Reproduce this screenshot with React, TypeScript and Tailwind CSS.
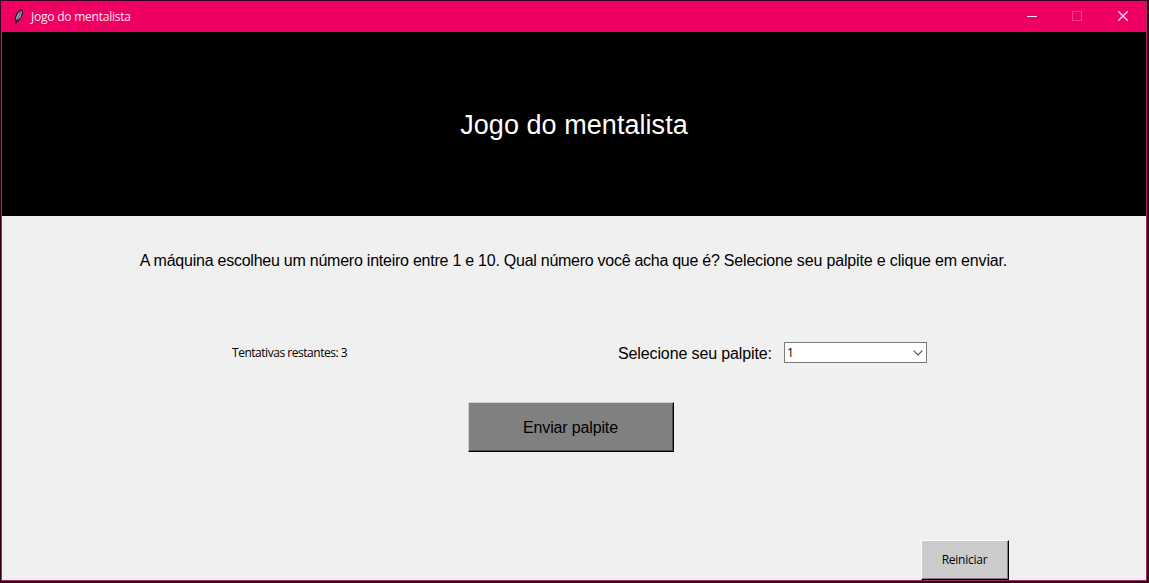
import { useState } from "react";

function FeatherIcon() {
  return (
    <svg className="mb-px block h-4 w-4" viewBox="0 0 16 16">
      <path d="M10.5 0.8 L12.8 1 L12.8 5 L11 9 L8.6 12 L7.2 12.8 L6.4 15.2 L5.4 15.2 L5.4 12 L4.6 11 L4.8 8 L6.8 4 Z" fill="#260a22" />
      <path d="M10.6 2 L11.8 2 L11.6 5 L10.2 8.4 L7.6 11.2 L6.2 10.8 L6.2 8 L8 4.4 Z" fill="#8fb0cc" />
      <path d="M10.8 3 L7 11" stroke="#3b3c58" strokeWidth="0.8" />
    </svg>
  );
}

function TitleBar() {
  return (
    <header className="flex h-[30px] shrink-0 items-center bg-[#ed0061] pl-2">
      <FeatherIcon />
      <h1 className="ml-[5px] grow text-[12px] leading-4 tracking-[-0.23px] text-[#ffe4f2]">Jogo do mentalista</h1>
      <button aria-label="Minimizar" className="flex h-full w-[46px] items-center justify-center pb-[2px] pl-[2px]">
        <svg className="h-[10px] w-[10px]" viewBox="0 0 10 10" shapeRendering="crispEdges">
          <path d="M0 5.5H10" stroke="#ffe8f4" />
        </svg>
      </button>
      <button aria-label="Maximizar" disabled className="flex h-full w-[46px] items-center justify-center pb-[2px]">
        <svg className="h-[10px] w-[10px]" viewBox="0 0 10 10" shapeRendering="crispEdges">
          <rect x="0.5" y="0.5" width="9" height="9" fill="none" stroke="#f93c88" />
        </svg>
      </button>
      <button aria-label="Fechar" className="flex h-full w-[46px] items-center justify-center pb-[2px]">
        <svg className="h-[10px] w-[10px]" viewBox="0 0 10 10">
          <path d="M0.3 0.3L9.7 9.7M9.7 0.3L0.3 9.7" stroke="#ffe8f4" strokeWidth="1.3" />
        </svg>
      </button>
    </header>
  );
}

function GuessSelect({ value }: { value: number }) {
  return (
    <button className="ml-3 flex h-[21px] w-[143px] items-center justify-between border border-[#7a7a7a] bg-white pr-[3px] pl-[2px]">
      <span className="text-[12px] leading-4">{value}</span>
      <svg className="h-[6px] w-[10px]" viewBox="0 0 10 6">
        <path d="M0.7 0.7L5 5L9.3 0.7" fill="none" stroke="#505050" strokeWidth="1.1" />
      </svg>
    </button>
  );
}

export default function App() {
  const [guess] = useState(1);
  const [attempts] = useState(3);

  return (
    <div className="h-[583px] w-[1149px] overflow-hidden bg-[#320019] pt-px pr-[2px] pb-[2px] font-['Open_Sans',sans-serif] text-black">
      <main className="ml-px flex h-[580px] flex-col border border-[#a02a62] bg-[#f0f0f0]">
        <TitleBar />
        <section className="flex h-[184px] shrink-0 items-center justify-center bg-black pt-[2px]">
          <h2 className="font-['Liberation_Sans',sans-serif] text-[27px] leading-8 tracking-[0.05px] text-white">Jogo do mentalista</h2>
        </section>
        <p className="mt-[35px] pr-px text-center font-['Liberation_Sans',sans-serif] text-[16px] leading-5 tracking-[-0.16px]">
          <span className="tracking-[-0.24px]">A máquina escolheu um número inteiro entre 1 e 10. </span>
          <span className="tracking-[-0.27px]">Qual número você acha que é? </span>
          Selecione seu palpite e clique em enviar.
        </p>
        <div className="mt-[71px] flex h-[21px] items-center pl-[230px]">
          <p className="w-[386px] text-[12px] leading-4 tracking-[-0.47px]">Tentativas restantes: {attempts}</p>
          <label className="w-[154px] pt-[2px] font-['Liberation_Sans',sans-serif] text-[16px] leading-5 tracking-[-0.12px] whitespace-nowrap">Selecione seu palpite:</label>
          <GuessSelect value={guess} />
        </div>
        <button className="mt-[39px] ml-[466px] h-[50px] w-[206px] border border-t-[#d0d0d0] border-r-black border-b-black border-l-[#d0d0d0] bg-[#808080] pt-px pr-px font-['Liberation_Sans',sans-serif] text-[16px] tracking-[-0.15px] shadow-[inset_-1px_-1px_0_#505050]">
          Enviar palpite
        </button>
        <button className="mt-[88px] ml-[919px] h-[40px] w-[88px] border border-t-white border-r-black border-b-black border-l-white bg-[#cccccc] pr-px text-[12px] leading-4 tracking-[-0.25px] shadow-[inset_-1px_-1px_0_#808080]">
          Reiniciar
        </button>
      </main>
    </div>
  );
}
